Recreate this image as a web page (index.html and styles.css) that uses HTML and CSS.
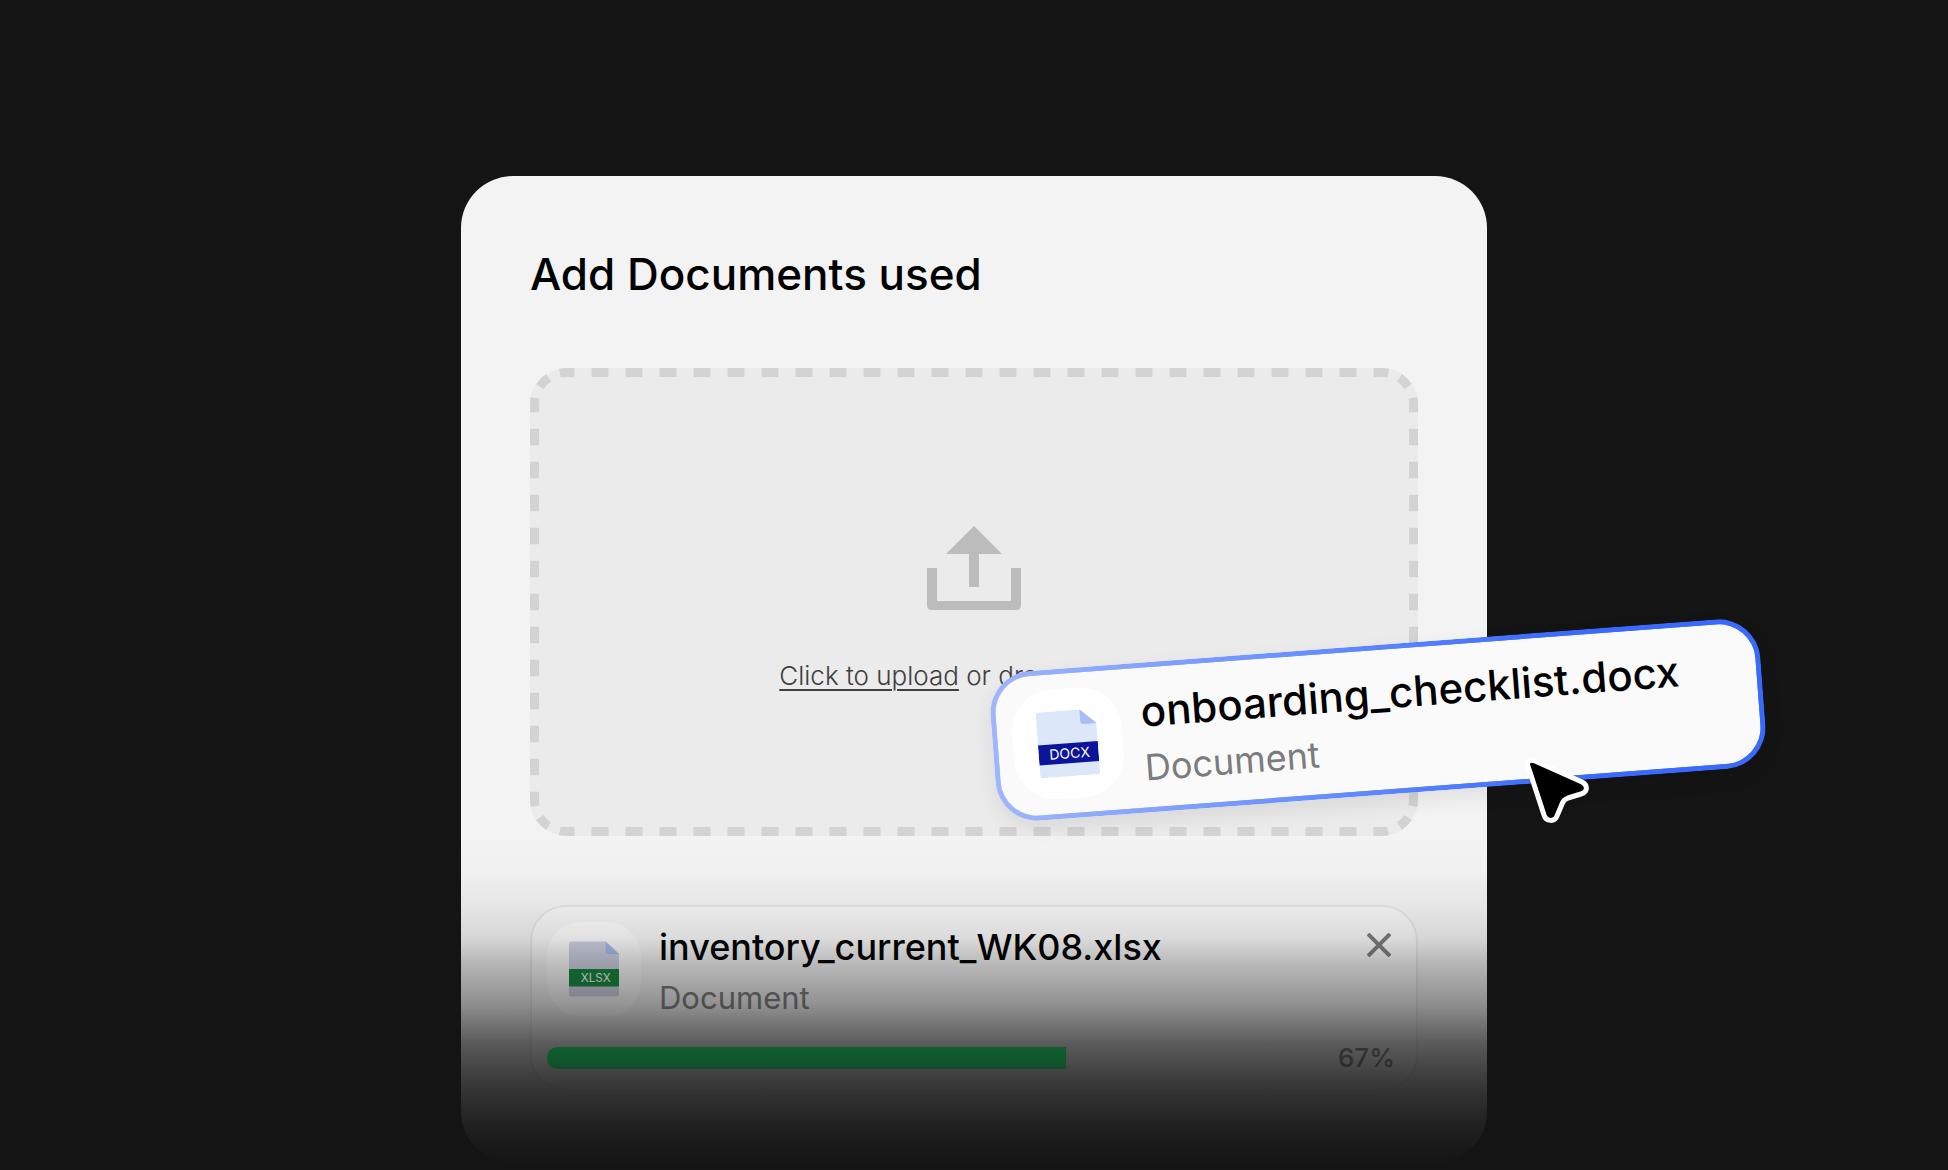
FILE: index.html
```html
<!DOCTYPE html>
<html lang="en">
<head>
    <meta charset="UTF-8">
    <meta name="viewport" content="width=device-width, initial-scale=1.0">
    <title>Add Documents</title>
    <link rel="stylesheet" href="styles.css">
</head>
<body>
    <main class="stage">
        <section class="panel">
            <h1 class="panel-title">Add Documents used</h1>

            <div class="dropzone">
                <svg class="dropzone-border" viewBox="0 0 888 468" preserveAspectRatio="none" aria-hidden="true">
                    <!-- straight sides -->
                    <path class="dash-x" d="M36 4.5H852M36 463.5H852"/>
                    <path class="dash-y" d="M4.5 36V432M883.5 36V432"/>
                    <!-- corners -->
                    <path class="dash-corner" d="M4.5 36A31.5 31.5 0 0 1 36 4.5M852 4.5A31.5 31.5 0 0 1 883.5 36M883.5 432A31.5 31.5 0 0 1 852 463.5M36 463.5A31.5 31.5 0 0 1 4.5 432"/>
                </svg>
                <svg class="upload-icon" viewBox="0 0 94 84" aria-hidden="true">
                    <path d="M47 0L75 28H52V61H42V28H19Z"/>
                    <path d="M0 42H10V75H84V42H94V79Q94 84 89 84H5Q0 84 0 79Z"/>
                </svg>
                <p class="dropzone-text"><label class="upload-link" for="fileInput">Click to upload</label> or drag and drop</p>
                <input class="file-input" type="file" id="fileInput" multiple>
            </div>

            <article class="file-card">
                <div class="file-row">
                    <div class="file-tile">
                        <svg class="file-icon" viewBox="0 0 60 66" aria-hidden="true">
                            <path class="sheet sheet-xlsx" d="M3 0H44L60 15V63Q60 66 57 66H3Q0 66 0 63V3Q0 0 3 0Z"/>
                            <path class="fold" d="M44 0L60 15H47Q44 15 44 12Z"/>
                            <path class="band band-xlsx" d="M0 33H60V54H0Z"/>
                            <text class="band-text" x="32" y="49">XLSX</text>
                        </svg>
                    </div>
                    <div class="file-info">
                        <h2 class="file-name">inventory_current_WK08.xlsx</h2>
                        <p class="file-type">Document</p>
                    </div>
                    <button class="close-button" type="button" aria-label="Remove file">
                        <svg viewBox="0 0 24 24" aria-hidden="true"><path d="M1 1L23 23M23 1L1 23"/></svg>
                    </button>
                </div>
                <div class="progress-row">
                    <progress class="progress" id="uploadProgress" value="67" max="100"></progress>
                    <label class="progress-label" for="uploadProgress">67%</label>
                </div>
            </article>
        </section>

        <article class="drag-card">
            <div class="file-tile">
                <svg class="file-icon" viewBox="0 0 60 66" aria-hidden="true">
                    <path class="sheet" d="M3 0H44L60 15V63Q60 66 57 66H3Q0 66 0 63V3Q0 0 3 0Z"/>
                    <path class="fold" d="M44 0L60 15H47Q44 15 44 12Z"/>
                    <path class="band band-docx" d="M0 33H60V53H0Z"/>
                    <text class="band-text" x="31" y="48">DOCX</text>
                </svg>
            </div>
            <div class="file-info">
                <h2 class="file-name">onboarding_checklist.docx</h2>
                <p class="file-type">Document</p>
            </div>
        </article>

        <svg class="cursor" viewBox="0 0 66 68" aria-hidden="true">
            <path d="M4 9L20 58C22 65 31 65 33 59L38 47C39 44 41 42 44 41L57 37C64 35 64 28 58 25L11 4C6 2 2 5 4 9Z"/>
        </svg>
    </main>
</body>
</html>
```
FILE: styles.css
```css
* {
    box-sizing: border-box;
}
body {
    margin: 0;
    min-height: 100vh;
    background: #141414;
    font-family: Inter, "Liberation Sans", sans-serif;
    color: #000;
}
h1, h2, p {
    margin: 0;
    font-weight: 400;
}
.stage {
    position: relative;
    max-width: 1026px;
    margin: 0 auto;
    padding-top: 176px;
}

/* panel */
.panel {
    position: relative;
    padding: 68px 69px 72px;
    border-radius: 52px;
    background: #f3f3f3;
}
/* fades the lower part of the panel into the page */
.panel::after {
    content: "";
    position: absolute;
    inset: auto -1px -1px -1px;
    height: 330px;
    background: linear-gradient(
        rgba(20, 20, 20, 0) 0,
        rgba(20, 20, 20, 0.01) 36px,
        rgba(20, 20, 20, 0.06) 72px,
        rgba(20, 20, 20, 0.13) 104px,
        rgba(20, 20, 20, 0.28) 130px,
        rgba(20, 20, 20, 0.45) 170px,
        rgba(20, 20, 20, 0.69) 210px,
        rgba(20, 20, 20, 0.84) 250px,
        rgba(20, 20, 20, 0.94) 290px,
        rgba(20, 20, 20, 1) 330px
    );
    pointer-events: none;
}
.panel-title {
    margin-bottom: 64px;
    font-size: 44px;
    line-height: 60px;
    font-weight: 500;
}

/* dropzone */
.dropzone {
    position: relative;
    display: flex;
    flex-direction: column;
    align-items: center;
    padding: 158px 20px 142px;
    border-radius: 36px;
    background: #ebebeb;
}
.dropzone-border {
    position: absolute;
    inset: 0;
    width: 100%;
    height: 100%;
    fill: none;
    stroke: #d3d3d3;
    stroke-width: 9;
}
.dash-x {
    stroke-dasharray: 17;
    stroke-dashoffset: 8.5;
}
.dash-y {
    stroke-dasharray: 16.5;
    stroke-dashoffset: 8.25;
}
.dash-corner {
    stroke-dasharray: 12.37;
    stroke-dashoffset: 6.18;
}
.upload-icon {
    width: 94px;
    height: 84px;
    margin-bottom: 48px;
    fill: #bbbcbb;
}
.dropzone-text {
    font-size: 26px;
    line-height: 36px;
    font-weight: 300;
    color: #404040;
}
.upload-link {
    text-decoration: underline;
    text-decoration-thickness: 2px;
    text-underline-offset: 4px;
    cursor: pointer;
}
.file-input {
    position: absolute;
    width: 1px;
    height: 1px;
    opacity: 0;
}

/* uploaded file */
.file-card {
    margin-top: 69px;
    padding: 15px;
    border: 2px solid #e6e6e6;
    border-radius: 36px;
    background: #f8f8f8;
}
.file-row {
    display: flex;
    align-items: flex-start;
    gap: 18px;
}
.file-tile {
    display: flex;
    flex: none;
    align-items: center;
    justify-content: center;
    width: 94px;
    height: 94px;
    border-radius: 34px;
    background: #fff;
}
.file-icon {
    width: 50px;
    height: 56px;
}
.sheet {
    fill: #dce8fa;
}
.sheet-xlsx {
    fill: #d0d5e6;
}
.fold {
    fill: #a9bcf3;
}
.band-xlsx {
    fill: #10883a;
}
.band-docx {
    fill: #0c149c;
}
.band-text {
    fill: #fff;
    font-size: 14px;
    text-anchor: middle;
}
.file-info {
    flex: 1;
    min-width: 0;
}
.file-name {
    font-size: 36px;
    line-height: 51px;
    font-weight: 500;
    white-space: nowrap;
}
.file-type {
    font-size: 31px;
    line-height: 49px;
    color: #7c7c7c;
}
.close-button {
    margin: 11px 10px;
    padding: 0;
    border: 0;
    background: none;
    cursor: pointer;
}
.close-button svg {
    display: block;
    width: 24px;
    height: 24px;
    fill: none;
    stroke: #7c7c7c;
    stroke-width: 4;
}
.progress-row {
    display: flex;
    align-items: center;
    gap: 16px;
    margin-top: 20px;
    padding-right: 6px;
}
.progress {
    position: relative;
    z-index: 1;
    flex: 1;
    height: 22px;
    border: 0;
    border-radius: 10px;
    background: none;
    overflow: hidden;
    appearance: none;
}
.progress::-webkit-progress-bar {
    background: none;
}
.progress::-webkit-progress-value {
    background: linear-gradient(#0f602e, #114d29);
}
.progress-label {
    font-size: 26px;
    line-height: 32px;
    font-weight: 500;
    color: #7c7c7c;
}

/* file being dragged in */
.drag-card {
    position: absolute;
    top: 645px;
    left: 531px;
    display: flex;
    align-items: center;
    gap: 20px;
    width: 772px;
    height: 150px;
    padding: 0 15px;
    border: 5px solid transparent;
    border-radius: 42px;
    background:
        linear-gradient(#fafafa, #fafafa) padding-box,
        linear-gradient(90deg, #9fb6fb, #6a90fb 40%, #3a6afb 75%) border-box;
    box-shadow: 0 8px 20px rgba(0, 0, 0, 0.08);
    transform: rotate(-4.3deg);
}
.drag-card .file-tile {
    width: 110px;
    height: 110px;
    border-radius: 42px;
}
.drag-card .file-icon {
    width: 60px;
    height: 66px;
}
.drag-card .file-name {
    font-size: 42px;
    line-height: 60px;
}
.drag-card .file-type {
    font-size: 36px;
    line-height: 52px;
}
.cursor {
    position: absolute;
    top: 757px;
    left: 1063px;
    width: 66px;
    height: 68px;
    fill: #000;
    stroke: #fff;
    stroke-width: 5;
    overflow: visible;
}
```
